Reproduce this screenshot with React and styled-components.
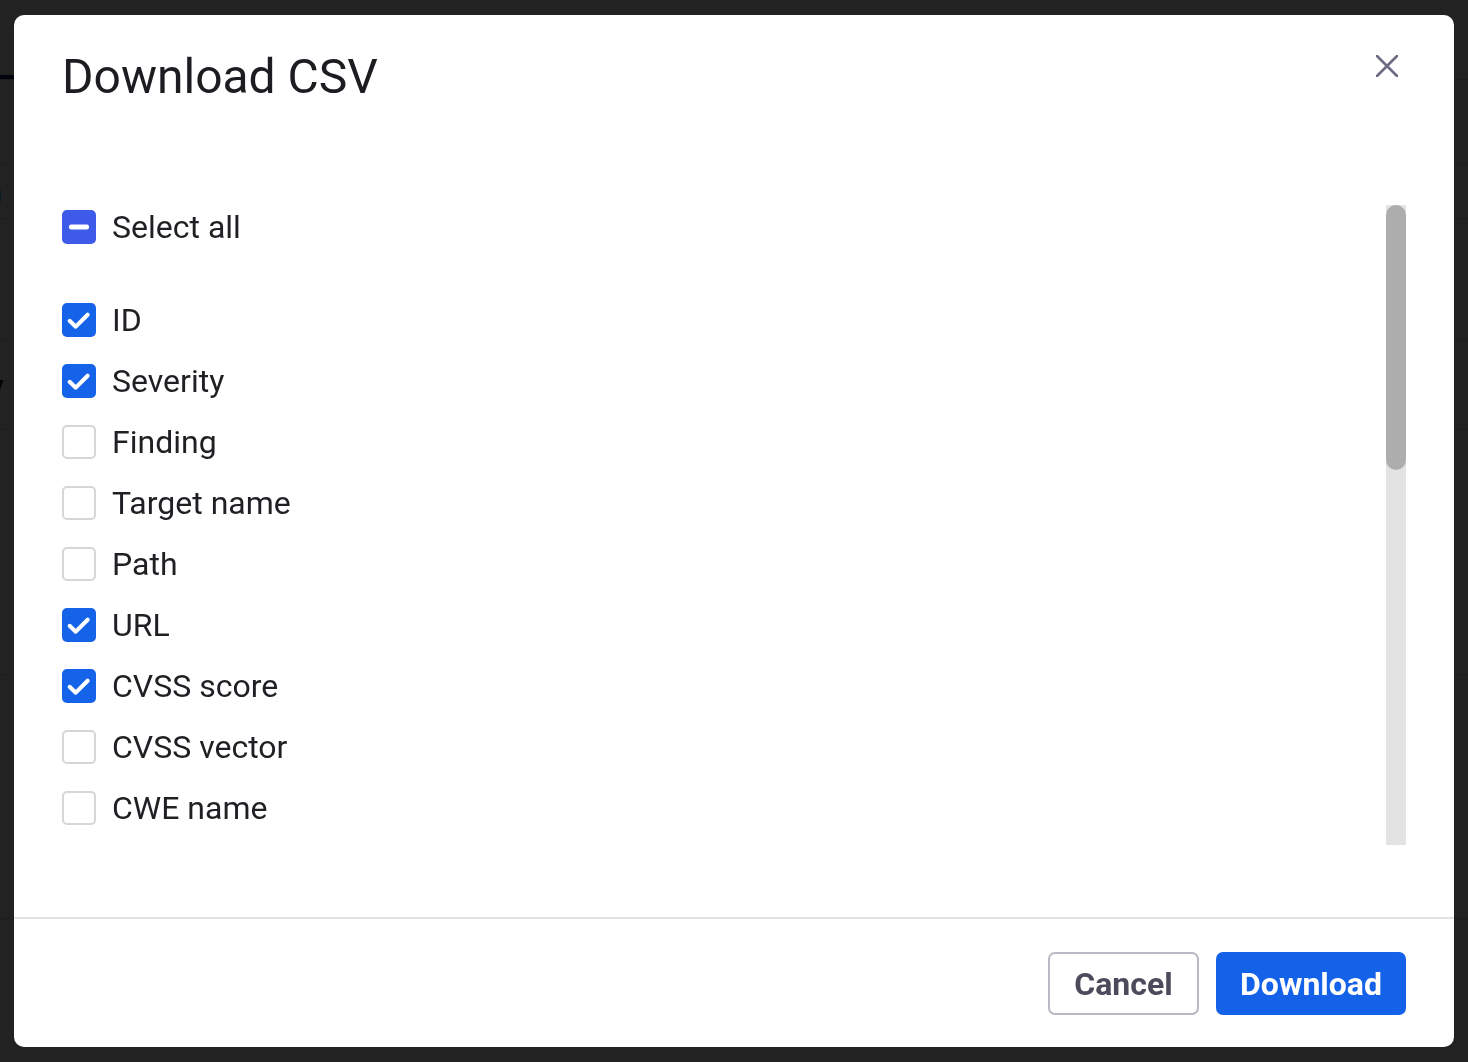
import React from 'react';
import styled, { createGlobalStyle } from 'styled-components';

const GlobalStyle = createGlobalStyle`
  html, body {
    margin: 0;
    padding: 0;
    background: #ffffff;
    font-family: Roboto, "Liberation Sans", Arial, sans-serif;
  }
  * {
    box-sizing: border-box;
  }
`;

// Page behind the dialog (mostly hidden by the backdrop)
const Page = styled.div`
  width: 100vw;
  height: 100vh;
  overflow: hidden;
  background: #ffffff;
`;

const PageInner = styled.div`
  margin-left: -92px;
  width: 1652px;
  display: flex;
  flex-direction: column;
`;

const PageTitle = styled.div`
  height: 52px;
  padding: 14px 0 0 0;
  font-size: 22px;
  font-weight: 700;
  color: #111;
`;

const Tabs = styled.div`
  display: flex;
  height: 28px;
  border-bottom: 1px solid #d8d8d8;
`;

const Tab = styled.div`
  width: 106px;
  border-bottom: 4px solid ${(p) => (p.$active ? '#0b1f5c' : 'transparent')};
`;

const Toolbar = styled.div`
  margin-top: 83px;
  height: 56px;
  border-top: 1px solid #dcdcdc;
  border-bottom: 1px solid #dcdcdc;
  display: flex;
  align-items: center;
  font-size: 30px;
  font-weight: 700;
  color: #0b1f5c;
`;

const TableHead = styled.div`
  margin-top: 121px;
  height: 90px;
  border-top: 1px solid #dcdcdc;
  border-bottom: 1px solid #dcdcdc;
  display: flex;
  justify-content: space-between;
  align-items: center;
  font-size: 26px;
  font-weight: 700;
  color: #111;
`;

const TableRow = styled.div`
  height: 245px;
  border-bottom: 1px solid #dcdcdc;
  display: flex;
  justify-content: flex-end;
  align-items: center;
  font-size: 26px;
  color: #111;
`;

const Backdrop = styled.div`
  position: fixed;
  inset: 0;
  background: rgba(0, 0, 0, 0.867);
  display: flex;
  justify-content: center;
  align-items: flex-start;
  padding-top: 15px;
`;

const Modal = styled.div`
  width: 1440px;
  height: 1032px;
  background: #ffffff;
  border-radius: 10px;
  display: flex;
  flex-direction: column;
  overflow: hidden;
`;

const Header = styled.div`
  height: 190px;
  padding: 23px 48px 0 48px;
  display: flex;
  justify-content: space-between;
  align-items: flex-start;
`;

const Title = styled.h2`
  margin: 0;
  font-size: 48px;
  font-weight: 400;
  line-height: 78px;
  color: #1c1c21;
`;

const CloseButton = styled.button`
  margin-top: 17px;
  margin-right: 8px;
  width: 22px;
  height: 22px;
  padding: 0;
  background: none;
  border: none;
  cursor: pointer;
  color: #6c6b84;
  display: flex;
`;

const Body = styled.div`
  flex: 1;
  padding: 0 48px;
`;

const ScrollArea = styled.div`
  height: 640px;
  display: flex;
`;

const List = styled.div`
  flex: 1;
  overflow: hidden;
  padding-top: 5px;
`;

const ScrollTrack = styled.div`
  flex: none;
  width: 20px;
  background: #e3e3e3;
`;

const ScrollThumb = styled.div`
  width: 20px;
  background: #adadad;
  border-radius: 10px;
`;

const SelectAllRow = styled.label`
  display: flex;
  align-items: center;
  gap: 16px;
  height: 34px;
  margin-bottom: 59px;
  cursor: pointer;
`;

const Options = styled.div`
  display: flex;
  flex-direction: column;
  gap: 27px;
  padding-bottom: 40px;
`;

const Option = styled.label`
  display: flex;
  align-items: center;
  gap: 16px;
  height: 34px;
  cursor: pointer;
`;

const Box = styled.span`
  flex: none;
  width: 34px;
  height: 34px;
  border-radius: 5px;
  display: flex;
  align-items: center;
  justify-content: center;
  background: ${(p) => (p.$state === 'mixed' ? '#3d5ae8' : p.$state === 'on' ? '#1463e8' : '#ffffff')};
  border: ${(p) => (p.$state === 'off' ? '2px solid #d6d6d9' : 'none')};
  color: #ffffff;
`;

const Label = styled.span`
  font-size: 32px;
  line-height: 34px;
  color: #1f1f24;
`;

const Footer = styled.div`
  height: 130px;
  border-top: 2px solid #e1e1e4;
  padding: 33px 48px 0;
  display: flex;
  justify-content: flex-end;
  align-items: flex-start;
  gap: 17px;
`;

const Button = styled.button`
  height: 63px;
  width: ${(p) => (p.$primary ? '190px' : '151px')};
  padding: 0;
  border-radius: 7px;
  font-family: Roboto, "Liberation Sans", Arial, sans-serif;
  font-size: 32px;
  font-weight: 700;
  cursor: pointer;
  background: ${(p) => (p.$primary ? '#1462e8' : '#ffffff')};
  color: ${(p) => (p.$primary ? '#ffffff' : '#4c4b5c')};
  border: 2px solid ${(p) => (p.$primary ? '#1462e8' : '#b9b8c4')};
`;

const CheckIcon = () => (
  <svg width="34" height="34" viewBox="0 0 24 24" fill="none">
    <path
      d="M5.4 12.6l4.3 4.1 8.4-8.4"
      stroke="currentColor"
      strokeWidth="2.9"
      strokeLinecap="round"
      strokeLinejoin="round"
    />
  </svg>
);

const MinusIcon = () => (
  <svg width="34" height="34" viewBox="0 0 34 34" fill="none">
    <rect x="7" y="14.5" width="20" height="5" rx="2" fill="currentColor" />
  </svg>
);

const Checkbox = ({ state }) => (
  <Box $state={state}>
    {state === 'on' && <CheckIcon />}
    {state === 'mixed' && <MinusIcon />}
  </Box>
);

const columns = [
  { name: 'ID', on: true },
  { name: 'Severity', on: true },
  { name: 'Finding', on: false },
  { name: 'Target name', on: false },
  { name: 'Path', on: false },
  { name: 'URL', on: true },
  { name: 'CVSS score', on: true },
  { name: 'CVSS vector', on: false },
  { name: 'CWE name', on: false },
  { name: 'CWE ID', on: false },
  { name: 'Description', on: false },
  { name: 'Solution', on: false },
  { name: 'References', on: false },
  { name: 'Status', on: false },
  { name: 'First seen', on: false },
  { name: 'Last seen', on: false },
];

const TRACK = 640;
const CONTENT = 1545;

export default function App() {
  return (
    <>
      <GlobalStyle />
      <Page>
        <PageInner>
          <PageTitle>Findings</PageTitle>
          <Tabs>
            <Tab $active />
            <Tab />
          </Tabs>
          <Toolbar>Search</Toolbar>
          <TableHead>
            <span>Severity</span>
            <span>URL</span>
          </TableHead>
          <TableRow>Jun</TableRow>
          <TableRow>Jun</TableRow>
          <TableRow>Jun</TableRow>
        </PageInner>
      </Page>

      <Backdrop>
        <Modal role="dialog" aria-labelledby="csv-title">
          <Header>
            <Title id="csv-title">Download CSV</Title>
            <CloseButton aria-label="Close">
              <svg width="22" height="22" viewBox="0 0 22 22" fill="none">
                <path d="M1 1l20 20M21 1L1 21" stroke="currentColor" strokeWidth="2.6" strokeLinecap="round" />
              </svg>
            </CloseButton>
          </Header>

          <Body>
            <ScrollArea>
              <List>
                <SelectAllRow>
                  <Checkbox state="mixed" />
                  <Label>Select all</Label>
                </SelectAllRow>
                <Options>
                  {columns.map((c) => (
                    <Option key={c.name}>
                      <Checkbox state={c.on ? 'on' : 'off'} />
                      <Label>{c.name}</Label>
                    </Option>
                  ))}
                </Options>
              </List>
              <ScrollTrack>
                <ScrollThumb style={{ height: Math.round((TRACK * TRACK) / CONTENT) }} />
              </ScrollTrack>
            </ScrollArea>
          </Body>

          <Footer>
            <Button>Cancel</Button>
            <Button $primary>Download</Button>
          </Footer>
        </Modal>
      </Backdrop>
    </>
  );
}
